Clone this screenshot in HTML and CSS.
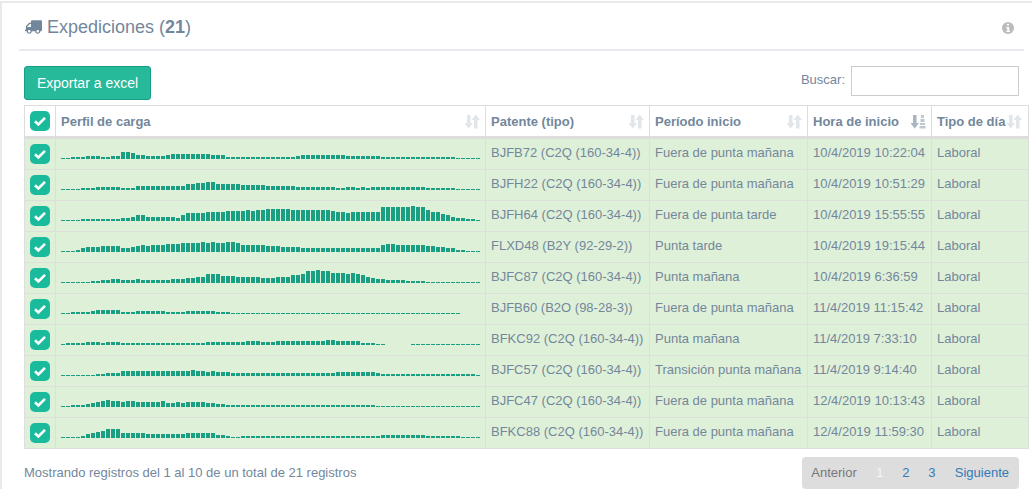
FILE: index.html
```html
<!DOCTYPE html>
<html lang="es">
<head>
<meta charset="UTF-8" />
<title>Expediciones</title>
<link rel="stylesheet" href="styles.css">
</head>
<body>

<svg class="defs" width="0" height="0">
  <symbol id="i-check" viewBox="0 0 20 20">
    <path d="M5 10.2l3.4 3.3L15 6.8" fill="none" stroke="#fff" stroke-width="2.6" />
  </symbol>
  <symbol id="i-sort" viewBox="0 0 15 15">
    <path d="M2 1h3.500v8H8L3.700 14.500-.5 9H2zM12.500 14.500H9V6H6.500L10.700 .5 15 6h-2.500z" />
  </symbol>
  <symbol id="i-sorted" viewBox="0 0 15 15">
    <path class="sort-on" d="M2 1h3.500v8H8L3.700 14.500-.5 9H2z" />
    <path class="sort-off" d="M10 1h3v3h-3zM9.500 5h4v3h-4zM9 9h5v2H9zM8.500 12h6v2.500h-6z" />
  </symbol>
</svg>

<div class="panel">
  <div class="panel-title">
    <h2>
      <svg class="truck" viewBox="0 0 640 512"><path d="M624 352h-16V243.900c0-12.700-5.100-24.900-14.100-33.900L494 110.100c-9-9-21.200-14.100-33.900-14.100H416V48c0-26.500-21.500-48-48-48H48C21.500 0 0 21.500 0 48v320c0 26.500 21.500 48 48 48h16c0 53 43 96 96 96s96-43 96-96h128c0 53 43 96 96 96s96-43 96-96h48c8.800 0 16-7.200 16-16v-32c0-8.800-7.200-16-16-16zM160 464c-26.500 0-48-21.500-48-48s21.500-48 48-48 48 21.500 48 48-21.500 48-48 48zm320 0c-26.500 0-48-21.500-48-48s21.500-48 48-48 48 21.500 48 48-21.500 48-48 48zm80-208H416V144h44.100l99.900 99.900V256z"/></svg>
      <span>Expediciones (<b>21</b>)</span>
    </h2>
    <svg class="info" viewBox="0 0 12 12">
      <circle cx="6" cy="6" r="6" />
      <path d="M5 1.800h2v1.800H5zM4.300 5h2.900v3.800H8v1.200H4.300V8.800h1V6.200h-1z" fill="#fff" />
    </svg>
  </div>

  <div class="content">
    <div class="toolbar">
      <button class="btn-excel" type="button">Exportar a excel</button>
      <label class="search">Buscar: <input type="text" /></label>
    </div>

    <table class="grid">
      <colgroup>
        <col class="c-check"><col class="c-spark"><col class="c-plate"><col class="c-period"><col class="c-time"><col class="c-day">
      </colgroup>
      <thead>
        <tr>
          <th class="check-cell"><span class="check"><svg><use href="#i-check"/></svg></span></th>
          <th><div class="th-in">Perfil de carga <svg class="sort"><use href="#i-sort"/></svg></div></th>
          <th><div class="th-in">Patente (tipo) <svg class="sort"><use href="#i-sort"/></svg></div></th>
          <th><div class="th-in">Período inicio <svg class="sort"><use href="#i-sort"/></svg></div></th>
          <th><div class="th-in">Hora de inicio <svg class="sort"><use href="#i-sorted"/></svg></div></th>
          <th><div class="th-in">Tipo de día<svg class="sort last"><use href="#i-sort"/></svg></div></th>
        </tr>
      </thead>
      <tbody id="filas"></tbody>
    </table>

    <div class="footer">
      <div class="count">Mostrando registros del 1 al 10 de un total de 21 registros</div>
      <div class="pager">
        <a class="off">Anterior</a>
        <a class="num current">1</a>
        <a class="num">2</a>
        <a class="num">3</a>
        <a class="next">Siguiente</a>
      </div>
    </div>
  </div>
</div>

<script src="script.js"></script>
</body>
</html>
```

FILE: styles.css
```css
html, body {
  margin: 0;
  height: 100%;
  overflow: hidden;
}
body {
  font-family: "Liberation Sans", Arial, sans-serif;
  font-size: 13px;
  color: #73879C;
  background: white;
}
.defs {
  display: block;
  position: absolute;
}

.panel {
  margin-top: 1px;
  border-top: 2px solid #e9e9e9;
  border-left: 2px solid #e9e9e9;
  padding: 0 8px 0 17px;
}
.panel-title {
  display: flex;
  justify-content: space-between;
  align-items: center;
  height: 46px;
  border-bottom: 2px solid #E6E9ED;
}
.panel-title h2 {
  margin: 2px 0 0 6px;
  font-size: 18px;
  font-weight: normal;
  display: flex;
  align-items: center;
  white-space: pre;
}
.truck {
  width: 17px;
  height: 14px;
  margin-right: 5px;
  fill: #73879C;
  transform: scaleX(-1);
}
.info {
  width: 12px;
  height: 12px;
  margin-right: 10px;
  margin-top: 4px;
  fill: #bbb;
}

.content {
  padding: 15px 5px 0;
}
.toolbar {
  display: flex;
  justify-content: space-between;
  align-items: flex-start;
  height: 39px;
}
.btn-excel {
  width: 127px;
  height: 34px;
  padding: 0;
  font-family: inherit;
  font-size: 14px;
  color: white;
  background: #26B99A;
  border: 1px solid #169F85;
  border-radius: 3px;
}
.search {
  display: flex;
  align-items: flex-start;
  line-height: 28px;
}
.search input {
  width: 168px;
  height: 30px;
  box-sizing: border-box;
  margin-left: 6px;
  border: 1px solid #ccc;
  padding: 0 6px;
}

.grid {
  width: 1004px;
  table-layout: fixed;
  border-collapse: collapse;
}
.c-check { width: 31px; }
.c-spark { width: 430px; }
.c-plate { width: 164px; }
.c-period { width: 158px; }
.c-time { width: 124px; }
.c-day { width: 97px; }
.grid th, .grid td {
  border: 1px solid #ddd;
  padding: 0 5px;
  height: 30px;
  box-sizing: content-box;
  text-align: left;
  white-space: nowrap;
}
.grid th {
  border-bottom: 3px solid #ddd;
  font-weight: bold;
}
.grid tbody td {
  background: #dff0d8;
  border-color: #dcdfdc;
}
.grid tbody td.text {
  height: 25px;
  padding-top: 5px;
  line-height: 18px;
  vertical-align: top;
}
.th-in {
  display: flex;
  justify-content: space-between;
  align-items: center;
}
.sort {
  flex: none;
  width: 15px;
  height: 15px;
  fill: #e1e6eb;
}
.sort.last {
  margin-right: 1px;
}
.sort-on { fill: #a9b5c1; }
.sort-off { fill: #bfc8d1; }

.check {
  display: block;
  width: 20px;
  height: 20px;
  background: #1ABB9C;
  border-radius: 5px;
}
.check svg {
  display: block;
  width: 20px;
  height: 20px;
}

.grid td.spark {
  vertical-align: top;
}
.bars {
  display: flex;
  align-items: flex-end;
  height: 15px;
  margin-top: 5px;
}
.bars span {
  flex: none;
  width: 4px;
  margin-right: 1px;
  background: #1a9f82;
}

.footer {
  display: flex;
  justify-content: space-between;
  align-items: center;
  margin-top: 8px;
}
.count {
  margin-bottom: 2px;
}
.pager {
  display: flex;
  height: 32px;
  line-height: 32px;
  background: #ddd;
  border-radius: 4px;
}
.pager a {
  color: #337ab7;
}
.pager a.off {
  color: #777;
  padding: 0 10px 0 9px;
}
.pager a.num {
  width: 26px;
  text-align: center;
}
.pager a.current {
  color: #f5f5f5;
}
.pager a.next {
  padding: 0 10px 0 10px;
}
```

FILE: script.js
```js
// [patente, periodo, hora, barras]
const filas = [
  ["BJFB72 (C2Q (160-34-4))", "Fuera de punta mañana", "10/4/2019 10:22:04",
    [1,1,2,2,2,3,3,3,2,2,3,3,7,7,6,4,4,3,3,3,3,4,5,5,5,5,5,5,5,5,4,4,4,2,2,2,2,2,2,2,2,2,2,2,2,2,2,3,4,4,4,4,4,4,4,4,4,3,3,3,3,3,3,3,2,2,2,2,2,2,2,2,2,2,2,2,2,2,2,1,1,1,1,1]],
  ["BJFH22 (C2Q (160-34-4))", "Fuera de punta mañana", "10/4/2019 10:51:29",
    [1,1,1,1,2,2,2,3,3,3,3,3,2,2,2,4,4,4,4,4,4,4,4,4,4,6,6,7,7,8,8,6,6,6,6,6,5,5,5,5,5,4,4,4,4,4,4,3,3,3,3,3,3,3,3,2,2,3,3,2,3,2,3,3,3,3,3,3,3,3,3,3,3,2,2,2,2,2,2,1,1,1,1,1]],
  ["BJFH64 (C2Q (160-34-4))", "Fuera de punta tarde", "10/4/2019 15:55:55",
    [1,1,1,1,2,2,2,2,2,2,2,2,3,3,4,6,6,4,4,4,4,4,4,3,6,8,8,8,8,9,9,9,9,10,10,10,10,11,10,11,11,12,12,12,12,12,11,11,11,11,11,11,11,11,10,9,9,8,9,9,9,9,9,9,14,14,14,14,14,14,15,14,14,11,9,9,7,6,4,3,3,2,2,1]],
  ["FLXD48 (B2Y (92-29-2))", "Punta tarde", "10/4/2019 19:15:44",
    [1,1,1,2,4,5,5,5,6,6,6,6,4,4,5,6,7,6,7,7,7,8,8,8,9,9,9,9,10,9,10,9,9,10,10,9,7,7,7,7,7,6,6,6,5,5,5,5,4,4,4,4,4,4,4,4,4,4,4,4,4,4,4,4,7,8,8,7,7,7,7,7,7,6,6,5,5,4,4,2,2,1,1,1]],
  ["BJFC87 (C2Q (160-34-4))", "Punta mañana", "10/4/2019 6:36:59",
    [1,1,1,1,1,1,2,2,3,3,4,4,3,3,3,4,3,3,3,3,3,3,4,4,4,5,5,6,6,9,9,9,7,7,7,6,6,6,6,6,5,5,5,6,6,6,8,8,9,12,12,13,12,12,10,10,10,9,10,9,8,6,5,4,4,3,3,3,3,2,2,2,2,1,1,1,1,1,1,1,1,1,1,1]],
  ["BJFB60 (B2O (98-28-3))", "Fuera de punta mañana", "11/4/2019 11:15:42",
    [1,1,2,2,2,2,3,4,4,4,4,4,2,2,2,3,3,3,3,3,3,2,2,2,2,3,3,3,3,3,3,2,2,2,1,1,1,1,1,1,1,1,1,1,1,1,1,1,1,1,1,1,1,1,1,1,1,1,1,1,1,1,1,1,1,1,1,1,1,1,1,1,1,1,1,1,1,1,1,1]],
  ["BFKC92 (C2Q (160-34-4))", "Punta mañana", "11/4/2019 7:33:10",
    [1,2,2,2,2,3,3,3,2,3,3,3,2,2,2,2,2,2,2,2,2,2,2,2,2,2,2,2,2,3,3,3,3,3,3,3,3,4,4,4,3,3,3,4,4,4,4,4,4,4,4,4,4,5,5,4,4,4,4,4,2,2,2,1,1,0,0,0,0,0,1,1,1,1,1,1,1,1,1,1,1,1,1,1]],
  ["BJFC57 (C2Q (160-34-4))", "Transición punta mañana", "11/4/2019 9:14:40",
    [1,1,1,1,1,1,1,2,2,3,3,3,5,5,5,5,5,5,5,5,5,5,5,5,5,5,6,5,5,4,5,4,4,4,3,3,3,3,3,3,3,3,3,3,3,3,3,3,3,3,3,3,3,3,3,4,4,4,4,4,4,4,4,3,2,2,2,2,2,2,2,2,2,2,2,2,2,2,2,2,2,2,2,1]],
  ["BJFC47 (C2Q (160-34-4))", "Fuera de punta mañana", "12/4/2019 10:13:43",
    [1,1,2,2,2,3,4,5,6,7,6,6,5,6,6,5,5,5,5,5,6,4,4,5,4,5,5,5,5,4,4,3,3,2,2,2,2,2,2,2,2,2,2,2,2,2,2,2,2,2,2,2,2,2,2,2,2,2,2,2,2,2,2,1,1,1,1,1,1,1,1,1,1,1,1,1,1,1,1,1,1,1,1,1]],
  ["BFKC88 (C2Q (160-34-4))", "Fuera de punta mañana", "12/4/2019 11:59:30",
    [1,1,1,1,2,4,5,6,7,9,9,9,5,5,5,5,5,4,4,4,4,4,4,4,4,5,5,5,5,5,5,3,3,2,1,1,2,2,2,2,2,2,2,2,2,2,2,2,2,2,2,2,2,2,2,2,2,2,2,2,2,2,2,2,3,3,3,3,3,3,3,3,3,2,2,2,2,2,2,2,1,1,1,1]]
];

const cuerpo = document.getElementById("filas");

filas.forEach((f) => {
  const barras = f[3].map((h) => `<span style="height:${h}px"></span>`).join("");
  const tr = document.createElement("tr");
  tr.innerHTML = `
    <td class="check-cell"><span class="check"><svg><use href="#i-check"/></svg></span></td>
    <td class="spark"><div class="bars">${barras}</div></td>
    <td class="text">${f[0]}</td>
    <td class="text">${f[1]}</td>
    <td class="text">${f[2]}</td>
    <td class="text">Laboral</td>`;
  cuerpo.appendChild(tr);
});
```
